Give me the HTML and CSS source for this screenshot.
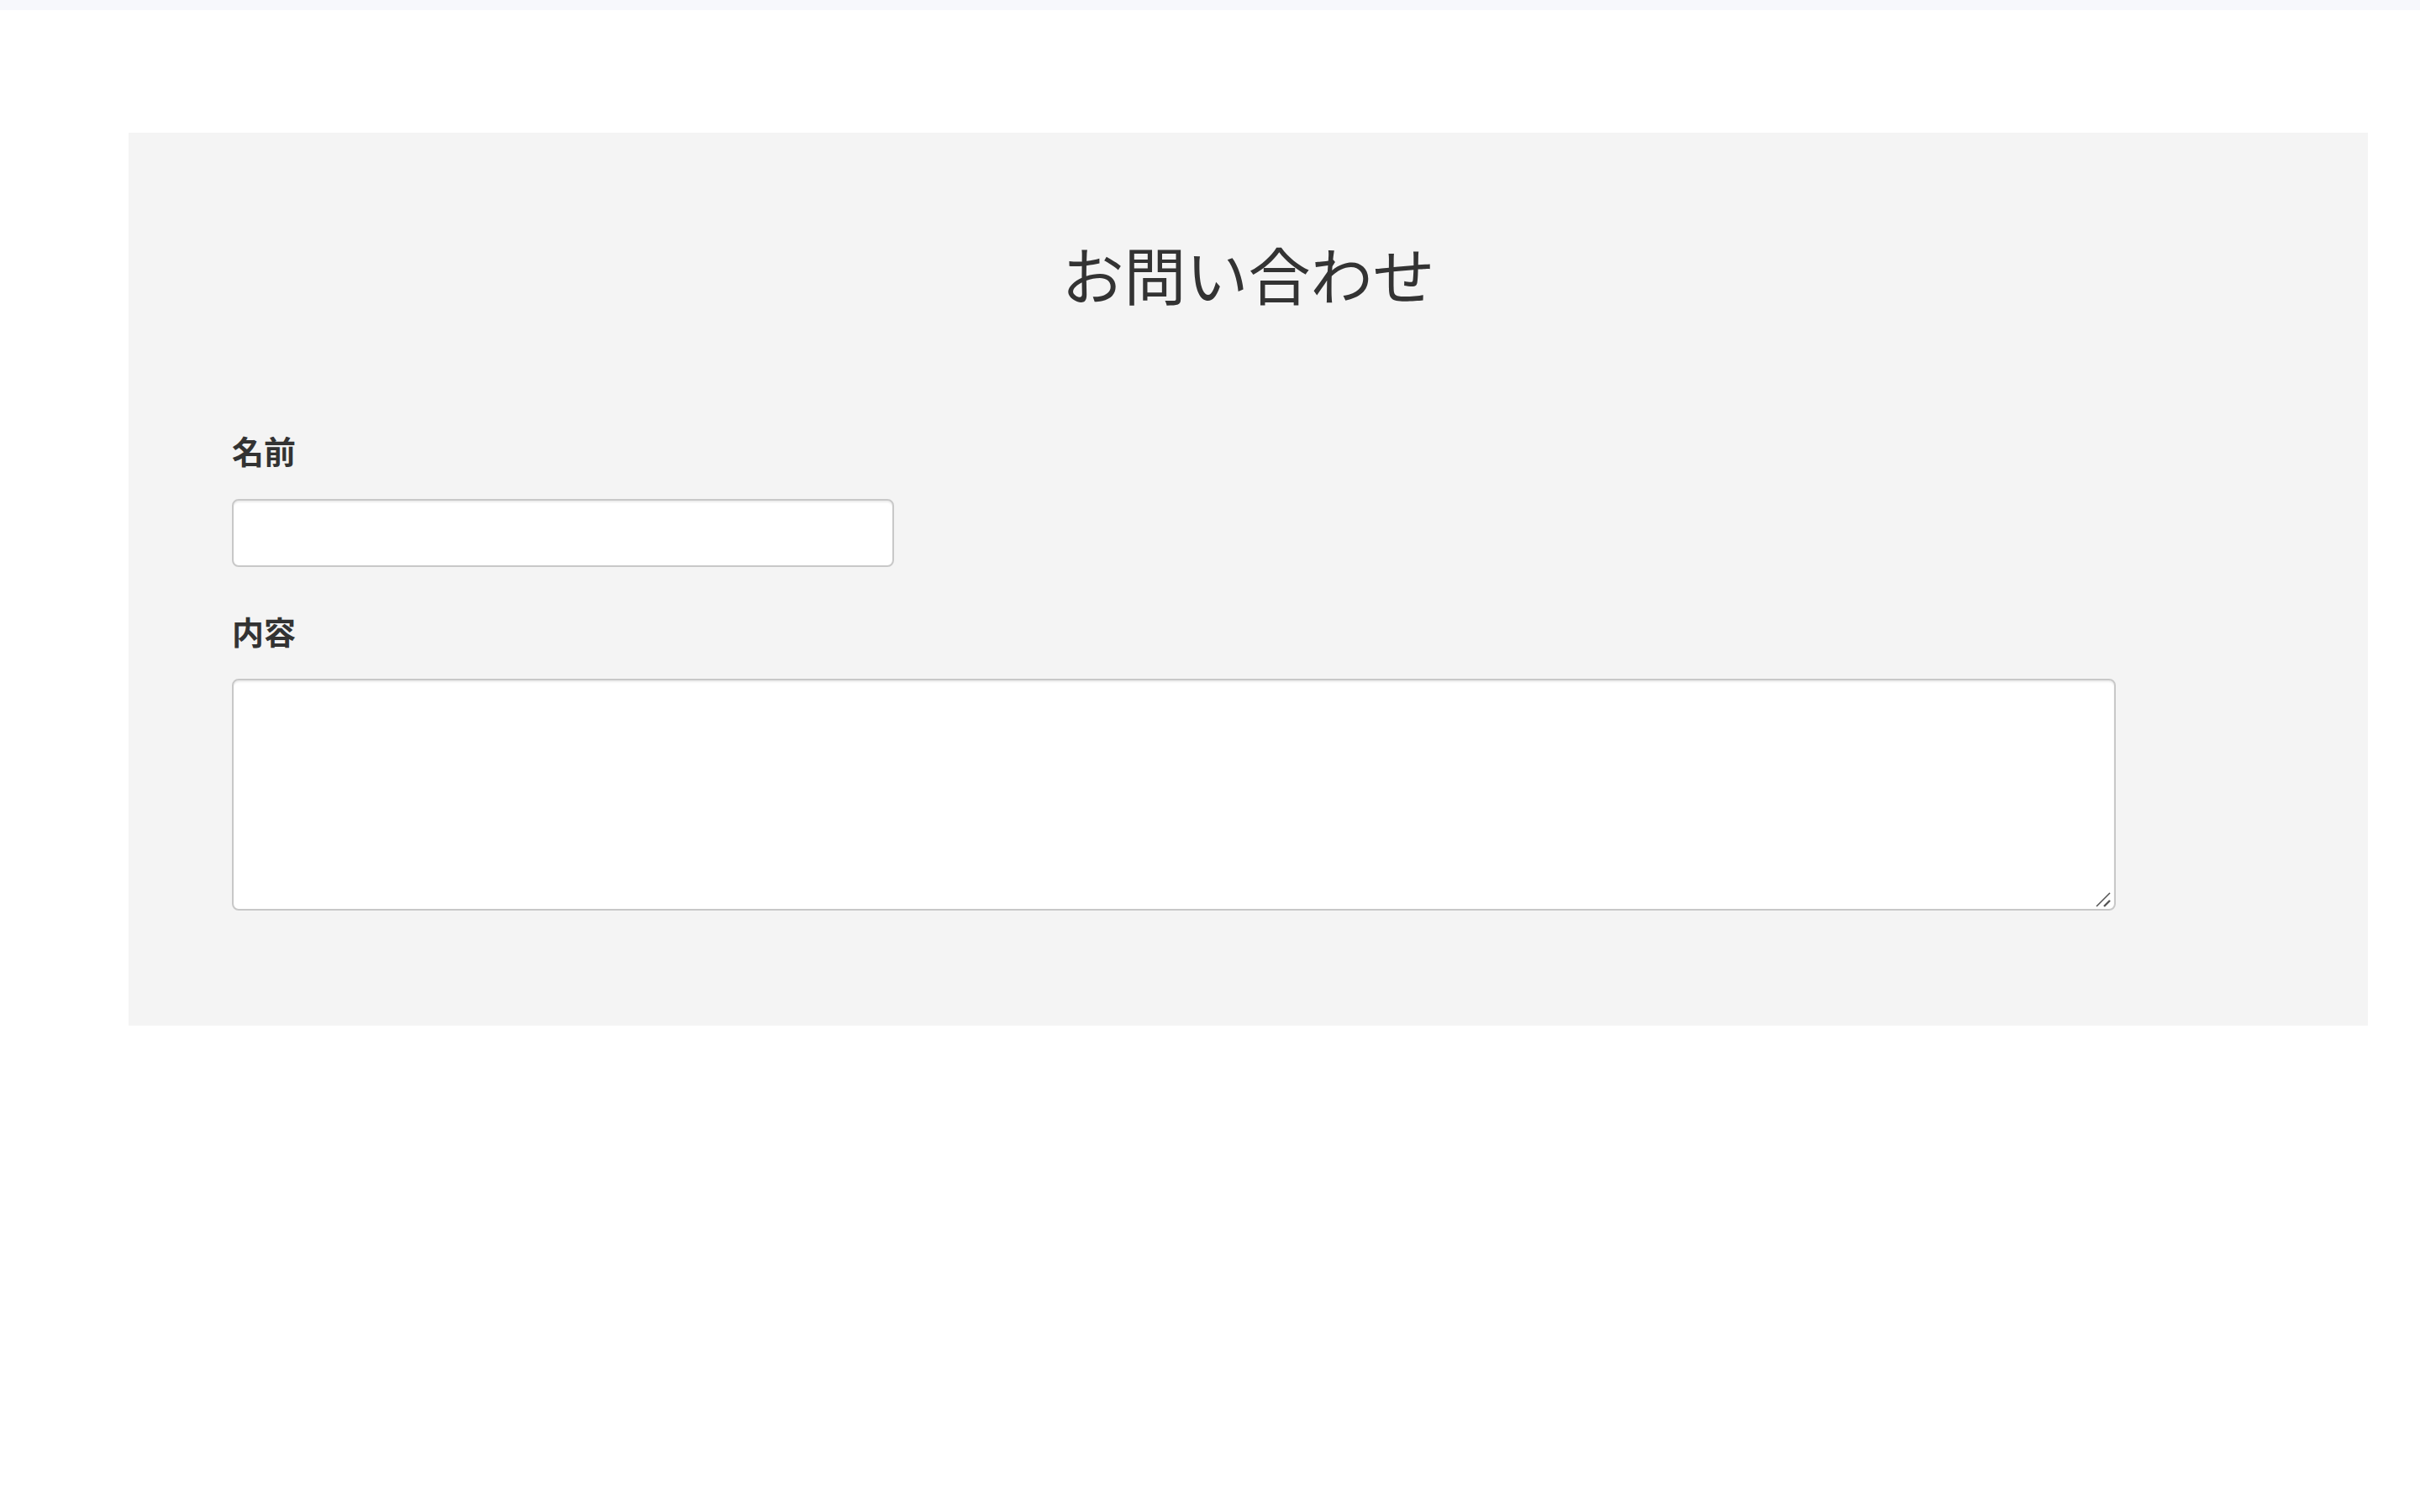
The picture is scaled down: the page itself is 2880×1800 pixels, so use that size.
FILE: index.html
```html
<!DOCTYPE html>
<html lang="ja">
<head>
<meta charset="utf-8">
<title>お問い合わせ</title>
<link rel="stylesheet" href="styles.css">
</head>
<body>
<div class="topbar"></div>
<section class="panel">
  <h1 class="title">お問い合わせ</h1>
  <form class="form">
    <label class="label" for="name">名前</label>
    <input class="input" id="name" type="text">
    <label class="label label-second" for="body">内容</label>
    <div class="textarea-wrap">
      <textarea class="textarea" id="body"></textarea>
      <svg class="grip" width="20" height="20" viewBox="0 0 20 20" aria-hidden="true">
        <line x1="2" y1="19" x2="18" y2="3" stroke="#555" stroke-width="1.6"/>
        <line x1="11" y1="19" x2="18" y2="12" stroke="#555" stroke-width="2.4"/>
      </svg>
    </div>
  </form>
</section>
</body>
</html>
```
FILE: styles.css
```css
html, body {
  margin: 0;
  padding: 0;
  background: #ffffff;
}
body {
  font-family: "Noto Sans CJK JP", "Noto Sans", sans-serif;
  color: #333333;
}
.topbar {
  height: 12px;
  background: #f7f8fc;
}
.panel {
  margin: 146px 62px 0 153px;
  background: #f4f4f4;
  padding: 124px 300px 137px 123px;
}
.title {
  margin: 0 -177px 140px 0;
  font-size: 74px;
  font-weight: 400;
  line-height: 86px;
  text-align: center;
}
.form {
  display: flex;
  flex-direction: column;
  align-items: flex-start;
}
.label {
  display: block;
  font-size: 38px;
  font-weight: 700;
  line-height: 56px;
  margin-bottom: 30px;
}
.label-second {
  margin-top: 48px;
  margin-bottom: 29px;
}
.input, .textarea {
  box-sizing: border-box;
  background: #ffffff;
  border: 2px solid #c8c8c8;
  border-radius: 8px;
  box-shadow: inset 0 2px 2px rgba(0, 0, 0, 0.08);
  font-family: inherit;
  font-size: 28px;
  margin: 0;
  outline: none;
}
.input {
  width: 788px;
  height: 81px;
}
.textarea-wrap {
  position: relative;
  width: 100%;
}
.textarea {
  display: block;
  width: 100%;
  height: 276px;
  resize: none;
}
.grip {
  position: absolute;
  right: 5px;
  bottom: 4px;
}
```
